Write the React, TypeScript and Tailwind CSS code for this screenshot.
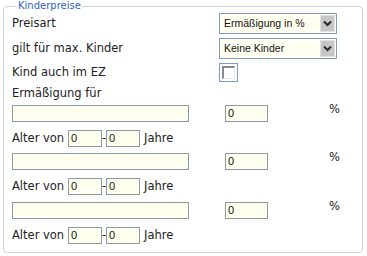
import React from 'react'

function Select({ value, h }: { value: string; h: string }) {
  return (
    <div className={`flex w-[118px] ${h} border border-[#7f9db9] bg-[#fffff0]`}>
      <div className="flex-1 flex items-center pl-[4px] font-['Liberation_Sans'] text-[10.5px] text-[#111]">{value}</div>
      <div className="w-[15px] m-[1px] flex items-center justify-center bg-[#c6c6c6] border border-[#e2e2e2]">
        <svg width="9" height="7" viewBox="0 0 9 7">
          <path d="M1 1.5 4.5 5 8 1.5" fill="none" stroke="#2b2b2b" strokeWidth="2" />
        </svg>
      </div>
    </div>
  )
}

function Input({ w, value }: { w: string; value?: string }) {
  return (
    <div className={`${w} h-[17px] border border-[#8a9ba8] bg-[#ffffee] flex items-center pl-[2px] font-['Liberation_Sans'] text-[11px] text-[#111]`}>
      {value}
    </div>
  )
}

function AgeRow({ mt }: { mt: string }) {
  return (
    <div className={`flex items-center h-[17px] ${mt}`}>
      <span className="w-[56px]">Alter von</span>
      <Input w="w-[34px]" value="0" />
      <span className="w-[4px] text-center">-</span>
      <Input w="w-[34px]" value="0" />
      <span className="ml-[4px]">Jahre</span>
    </div>
  )
}

function PriceRow({ mt }: { mt: string }) {
  return (
    <div className={`flex h-[17px] ${mt}`}>
      <div className="w-[213px]">
        <Input w="w-[177px]" />
      </div>
      <Input w="w-[43px]" value="0" />
      <span className="ml-[61px] -mt-[3px] leading-[14px]">%</span>
    </div>
  )
}

export default function App() {
  return (
    <div className="w-[367px] h-[256px] bg-white pl-[3px] font-['DejaVu_Sans',sans-serif] text-[11.5px] text-[#222]">
      <fieldset className="w-[360px] border border-[#d2d2d2] rounded-[4px] px-[8px] pt-[1px] pb-[8px]">
        <legend className="ml-[5px] px-[1px] text-[10px] leading-[12px] text-[#2f62c0]">Kinderpreise</legend>

        <div className="flex items-center h-[21px]">
          <span className="w-[207px]">Preisart</span>
          <Select value="Ermäßigung in %" h="h-[21px]" />
        </div>
        <div className="flex items-center h-[21px] mt-[4px]">
          <span className="w-[207px]">gilt für max. Kinder</span>
          <Select value="Keine Kinder" h="h-[21px]" />
        </div>
        <div className="flex items-center h-[19px] mt-[4px]">
          <span className="w-[207px]">Kind auch im EZ</span>
          <div className="w-[19px] h-[19px] border border-[#7f9db9] bg-white p-[2px]">
            <div className="w-full h-full border-t-2 border-l-2 border-b border-r border-t-[#8c8c8c] border-l-[#8c8c8c] border-b-[#e6e6e6] border-r-[#e6e6e6] bg-white" />
          </div>
        </div>
        <div className="flex items-center h-[16px] mt-[4px]">
          <span>Ermäßigung für</span>
        </div>

        <PriceRow mt="mt-[3px]" />
        <AgeRow mt="mt-[8px]" />
        <PriceRow mt="mt-[6px]" />
        <AgeRow mt="mt-[8px]" />
        <PriceRow mt="mt-[7px]" />
        <AgeRow mt="mt-[8px]" />
      </fieldset>
    </div>
  )
}
